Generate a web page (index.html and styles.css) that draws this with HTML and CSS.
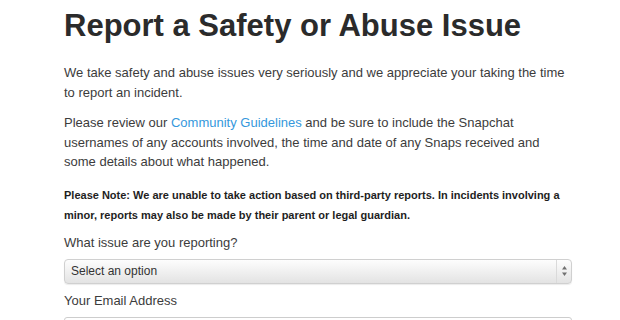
FILE: index.html
```html
<!DOCTYPE html>
<html lang="en">
  <head>
    <meta charset="UTF-8" />
    <meta name="viewport" content="width=device-width, initial-scale=1.0" />
    <title>Report a Safety or Abuse Issue</title>
    <link rel="stylesheet" href="styles.css">
  </head>
  <body>
    <div class="page">
      <h1>Report a Safety or Abuse Issue</h1>

      <p>We take safety and abuse issues very seriously and we appreciate your taking the time to report an incident.</p>

      <p class="guidelines">Please review our <a href="#">Community Guidelines</a> and be sure to include the Snapchat usernames of any accounts involved, the time and date of any Snaps received and some details about what happened.</p>

      <p class="note">Please Note: We are unable to take action based on third-party reports. In incidents involving a minor, reports may also be made by their parent or legal guardian.</p>

      <form class="report-form">
        <label for="issue">What issue are you reporting?</label>
        <div class="select-wrap">
          <select id="issue">
            <option>Select an option</option>
          </select>
          <span class="arrows">
            <svg width="5" height="10" viewBox="0 0 5 10">
              <path d="M2.5 0 L5 3.5 L0 3.5 Z" fill="#707070" />
              <path d="M2.5 10 L5 6.5 L0 6.5 Z" fill="#707070" />
            </svg>
          </span>
        </div>

        <label for="email">Your Email Address</label>
        <input type="email" id="email" />
      </form>
    </div>
  </body>
</html>
```

FILE: styles.css
```css
* {
  box-sizing: border-box;
}

body {
  margin: 0;
  background: #fff;
  font-family: "Liberation Sans", Arial, sans-serif;
  color: #3c3c3c;
}

.page {
  width: 508px;
  margin-left: 64px;
  padding-top: 7px;
}

h1 {
  margin: 0 0 18px;
  font-size: 31px;
  line-height: 38px;
  font-weight: bold;
  color: #2b2b2b;
}

p {
  margin: 0;
  font-size: 13px;
  line-height: 19.5px;
}

.guidelines {
  margin-top: 11px;
}

a {
  color: #3598dc;
  text-decoration: none;
}

.note {
  margin-top: 13px;
  margin-bottom: 8px;
  font-size: 11px;
  line-height: 20px;
  font-weight: bold;
  color: #1e1e1e;
}

.report-form label {
  display: block;
  font-size: 13px;
  line-height: 20px;
  margin-bottom: 6px;
}

.select-wrap {
  position: relative;
  margin-bottom: 7px;
}

.select-wrap select {
  display: block;
  width: 100%;
  height: 25px;
  padding: 0 24px 0 6px;
  font-family: inherit;
  font-size: 12px;
  color: #333;
  border: 1px solid #d0d0d0;
  border-radius: 4px;
  background: linear-gradient(#fdfdfd, #e3e3e3);
  box-shadow: 0 1px 1px rgba(0, 0, 0, 0.08);
  appearance: none;
  -webkit-appearance: none;
}

.arrows {
  position: absolute;
  top: 1px;
  right: 1px;
  bottom: 1px;
  width: 15px;
  border-left: 1px solid #dadada;
  display: flex;
  align-items: center;
  justify-content: center;
  pointer-events: none;
}

.report-form input {
  display: block;
  width: 100%;
  height: 30px;
  border: 1px solid #cdcdcd;
  border-radius: 3px;
}
```
